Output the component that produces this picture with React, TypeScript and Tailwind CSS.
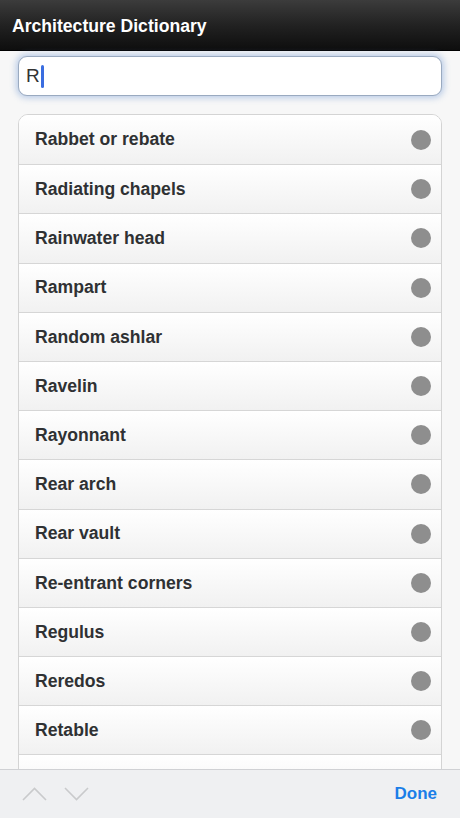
import { useState } from 'react';

const terms = [
  'Rabbet or rebate',
  'Radiating chapels',
  'Rainwater head',
  'Rampart',
  'Random ashlar',
  'Ravelin',
  'Rayonnant',
  'Rear arch',
  'Rear vault',
  'Re-entrant corners',
  'Regulus',
  'Reredos',
  'Retable',
  'Reticulated',
];

export default function App() {
  const [query] = useState('R');

  return (
    <div className="h-[818px] w-[460px] flex flex-col overflow-hidden bg-[#f7f7f7] font-['Liberation_Sans',Arial,sans-serif]">
      {/* Title bar */}
      <header className="h-[51px] shrink-0 flex items-center px-3 pt-[3px] bg-gradient-to-b from-[#3c3c3c] via-[#222] to-[#0e0e0e] border-b border-black">
        <h1 className="text-white font-bold text-[17.6px]">Architecture Dictionary</h1>
      </header>

      {/* Search field */}
      <div className="shrink-0 px-[18px] pt-[5px] pb-[18px]">
        <div className="h-[40px] rounded-[9px] bg-white border border-[#9aaac0] shadow-[0_0_6px_2px_rgba(110,150,210,0.45)] flex items-center px-[7px]">
          <span className="text-[19px] text-[#333]">{query}</span>
          <span className="w-[3px] h-[23px] bg-[#3a6de0] rounded-sm ml-[1px]" />
        </div>
      </div>

      {/* Results list */}
      <div className="flex-1 min-h-0 px-[18px]">
        <ul className="rounded-t-[10px] border border-[#d4d4d4] bg-white overflow-hidden">
          {terms.map((t, i) => (
            <li
              key={t}
              className={`h-[49.2px] flex items-center justify-between pl-4 pr-[10px] bg-gradient-to-b from-white to-[#f1f1f1] ${i > 0 ? 'border-t border-[#d6d6d6]' : ''}`}
            >
              <span className="text-[17.6px] font-bold text-[#2f3133]">{t}</span>
              <span className="w-[20px] h-[20px] rounded-full bg-[#8e8e8e]" />
            </li>
          ))}
        </ul>
      </div>

      {/* Keyboard accessory bar */}
      <footer className="h-[49px] shrink-0 flex items-center justify-between bg-[#eff0f2] border-t border-[#d0d1d4] pl-[22px] pr-[23px]">
        <div className="flex items-center gap-[17px]">
          <svg width="25" height="14" viewBox="0 0 25 14" fill="none" stroke="#c9cacc" strokeWidth="1.6">
            <path d="M1 13 L12.5 1.5 L24 13" />
          </svg>
          <svg width="25" height="14" viewBox="0 0 25 14" fill="none" stroke="#c9cacc" strokeWidth="1.6">
            <path d="M1 1 L12.5 12.5 L24 1" />
          </svg>
        </div>
        <button className="text-[17px] font-bold text-[#1a7ee8]">Done</button>
      </footer>
    </div>
  );
}
